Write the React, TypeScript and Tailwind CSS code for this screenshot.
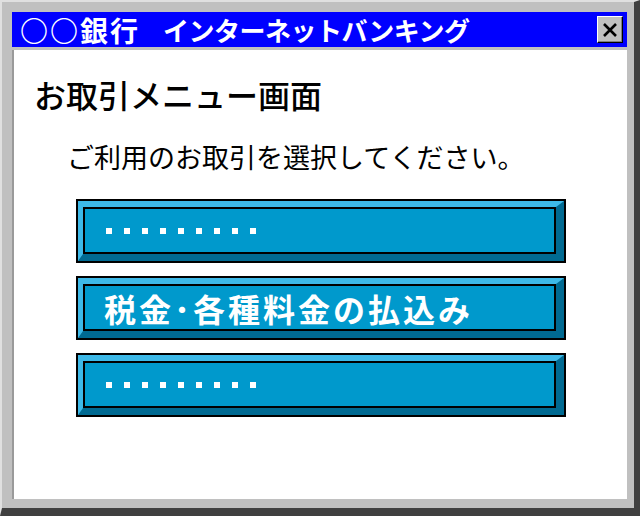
import React from "react";

const jp = { fontFamily: '"Noto Sans CJK JP", "Noto Sans", sans-serif' };

function Dots() {
  return (
    <div className="flex items-center gap-[12px]">
      {Array.from({ length: 9 }).map((_, i) => (
        <span key={i} className="block h-[6px] w-[6px] bg-white" />
      ))}
    </div>
  );
}

function MenuButton({ children }: { children: React.ReactNode }) {
  return (
    <div className="h-[64px] w-[490px] border-2 border-black">
      <div className="h-full w-full border-t-[6px] border-l-[5px] border-r-[8px] border-b-[7px] border-t-[#3db9e8] border-l-[#3db9e8] border-r-[#006a92] border-b-[#006a92]">
        <div className="flex h-full w-full items-center border-2 border-black bg-[#0099cc] pl-[21px]">
          {children}
        </div>
      </div>
    </div>
  );
}

export default function App() {
  return (
    <div
      className="flex h-[516px] w-[640px] flex-col border-l-2 border-t-2 border-r-[6px] border-b-[8px] border-l-[#e0e0e0] border-t-[#e0e0e0] border-r-[#404040] border-b-[#404040] bg-[#c0c0c0] pl-[10px] pr-[7px] pt-[10px] pb-[9px]"
      style={jp}
    >
      {/* title bar */}
      <div className="flex h-[35px] shrink-0 items-center justify-between bg-[#0000ff] pl-[8px] pr-[4px]">
        <div className="flex items-center font-semibold leading-none text-white">
          <span className="text-[28px] tracking-[2px]">○○銀行</span>
          <span className="ml-[23px] text-[26px] tracking-[-0.5px]">インターネットバンキング</span>
        </div>
        <div className="flex h-[27px] w-[26px] items-center justify-center border border-t-white border-l-white border-r-black border-b-black bg-[#c0c0c0] shadow-[inset_-1px_-1px_0_#808080]">
          <svg width="18" height="18" viewBox="0 0 18 18">
            <path d="M3 3 L15 15 M15 3 L3 15" stroke="#000" strokeWidth="2.6" />
          </svg>
        </div>
      </div>

      {/* client area */}
      <div className="mt-[3px] flex flex-1 flex-col border-l-2 border-[#9a9a9a] bg-white pl-[20px] pt-[28px]">
        <h1 className="text-[32px] font-medium leading-none text-black">お取引メニュー画面</h1>
        <p className="mt-[33px] pl-[33px] text-[27px] leading-none text-black">
          ご利用のお取引を選択してください。
        </p>
        <div className="mt-[29px] flex flex-col gap-[13px] pl-[42px]">
          <MenuButton>
            <Dots />
          </MenuButton>
          <MenuButton>
            <span className="-ml-[2px] text-[32px] font-bold leading-none tracking-[3px] text-white">
              税金･各種料金の払込み
            </span>
          </MenuButton>
          <MenuButton>
            <Dots />
          </MenuButton>
        </div>
      </div>
    </div>
  );
}
